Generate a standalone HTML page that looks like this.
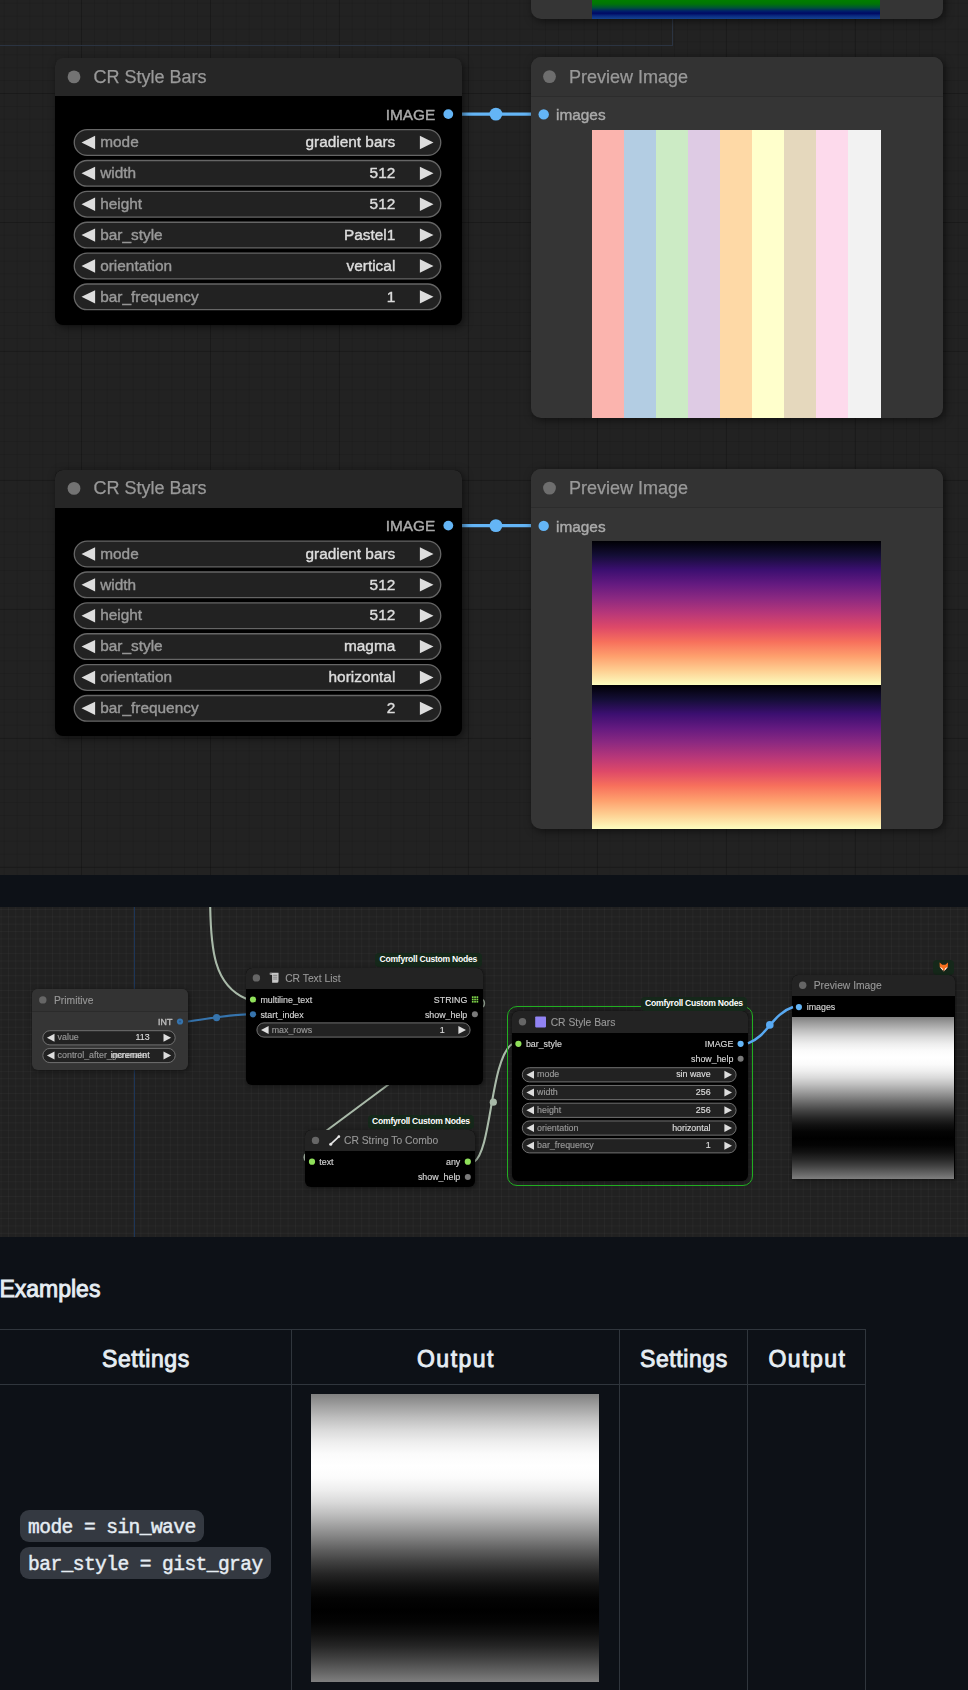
<!DOCTYPE html>
<html><head><meta charset="utf-8"><title>CR Style Bars</title>
<style>
*{box-sizing:border-box}
html,body{margin:0;padding:0}
body{width:968px;height:1690px;background:#0d1117;position:relative;overflow:hidden;font-family:"Liberation Sans",Arial,sans-serif}
.abs,.cv *{position:absolute}
.cv{position:absolute;left:0;width:968px;overflow:hidden}
.cv svg{overflow:visible}
.grid1{left:0;top:0;width:100%;height:100%;
 background-image:
  linear-gradient(to right,rgba(0,0,0,.17) 0,rgba(0,0,0,.17) 1.5px,transparent 1.5px),
  linear-gradient(to bottom,rgba(0,0,0,.17) 0,rgba(0,0,0,.17) 1.5px,transparent 1.5px),
  linear-gradient(to right,rgba(0,0,0,.085) 0,rgba(0,0,0,.085) 1px,transparent 1px),
  linear-gradient(to bottom,rgba(0,0,0,.085) 0,rgba(0,0,0,.085) 1px,transparent 1px);
 background-size:129px 129px,129px 129px,12.9px 12.9px,12.9px 12.9px;
 background-position:81px 93px,81px 93px,81px 93px,81px 93px}
.grid2{left:0;top:0;width:100%;height:100%;
 background-image:
  linear-gradient(to right,rgba(255,255,255,.026) 0,rgba(255,255,255,.026) 1px,transparent 1px),
  linear-gradient(to bottom,rgba(255,255,255,.026) 0,rgba(255,255,255,.026) 1px,transparent 1px);
 background-size:7.37px 7.37px;background-position:0.6px 2px}
.nd{box-shadow:2px 2px 8px rgba(0,0,0,.55)}
.nd2{box-shadow:1px 1px 5px rgba(0,0,0,.5)}
.t{white-space:nowrap}
text{white-space:pre}
.b1{font-size:15.4px;stroke-width:.4px}
.t1{font-size:18px;fill:#999;stroke:#999;stroke-width:.25px}
.s2{font-size:8.87px;stroke-width:.15px}
.t2{font-size:10.3px;fill:#999;stroke:#999;stroke-width:.1px}
.bd{background:#15281a;border-radius:4px;color:#fff;font-size:8.6px;font-weight:bold;text-align:center;white-space:nowrap;letter-spacing:-.25px}
.gh{color:#e6edf3;white-space:nowrap}
.h{font-weight:normal;-webkit-text-stroke:.9px currentColor}
.chip{height:32px;border-radius:9px;background:#343941;color:#e6edf3;font-family:"Liberation Mono",monospace;font-size:19.6px;letter-spacing:-.59px;line-height:37.4px;padding-left:8.3px;white-space:nowrap;-webkit-text-stroke:.45px currentColor;overflow:hidden}
</style></head>
<body>
<div class="cv" style="top:0px;height:875.1px;background-color:#222"><div class="grid1"></div><svg style="left:0;top:0" width="968" height="875.1"><path d="M459.9,114.1 H545" stroke="#64b5f6" stroke-width="3.3" fill="none"/><circle cx="495.9" cy="114.1" r="6.4" fill="#64b5f6"/><path d="M459.9,525.6 H545" stroke="#64b5f6" stroke-width="3.3" fill="none"/><circle cx="495.9" cy="525.6" r="6.4" fill="#64b5f6"/></svg><div style="left:0;top:45px;width:673px;height:1px;background:#2b3442"></div><div style="left:672px;top:19px;width:1px;height:27px;background:#2b3442"></div><div class="nd" style="left:530.5px;top:-30px;width:412.9px;height:48.7px;background:#353535;border-radius:10px"></div><div class="" style="left:592.3px;top:-1px;width:288px;height:20.2px;background:linear-gradient(to bottom,#007e00 0,#007c00 2px,#007408 5px,#00503a 9px,#00206a 12px,#000a64 14.3px,#0a2c82 17px,#16448f 20.2px)"></div><div class="nd" style="left:55.4px;top:58.5px;width:406.5px;height:266px;background:#000;border-radius:8px"></div><div class="" style="left:55.4px;top:58.3px;width:406.5px;height:38.2px;background:#262626;border-radius:8px 8px 0 0"></div><div class="nd" style="left:530.5px;top:57px;width:412.9px;height:360.7px;background:#353535;border-radius:10px"></div><div class="" style="left:530.5px;top:57px;width:412.9px;height:39.5px;background:#333;border-radius:10px 10px 0 0;border-bottom:1px solid #2c2c2c"></div><div class="" style="left:592.3px;top:129.5px;width:288.5px;height:288px;background:linear-gradient(to right,#fbb4ae 0px,#fbb4ae 32px,#b3cde3 32px,#b3cde3 64px,#ccebc5 64px,#ccebc5 96px,#decbe4 96px,#decbe4 128px,#fed9a6 128px,#fed9a6 160px,#ffffcc 160px,#ffffcc 192px,#e5d8bd 192px,#e5d8bd 224px,#fddaec 224px,#fddaec 256px,#f2f2f2 256px,#f2f2f2 288px)"></div><div class="nd" style="left:55.4px;top:470px;width:406.5px;height:266px;background:#000;border-radius:8px"></div><div class="" style="left:55.4px;top:469.8px;width:406.5px;height:38.2px;background:#262626;border-radius:8px 8px 0 0"></div><div class="nd" style="left:530.5px;top:468.5px;width:412.9px;height:360.7px;background:#353535;border-radius:10px"></div><div class="" style="left:530.5px;top:468.5px;width:412.9px;height:39.5px;background:#333;border-radius:10px 10px 0 0;border-bottom:1px solid #2c2c2c"></div><div class="" style="left:592.3px;top:541px;width:288.5px;height:288px;background:linear-gradient(to bottom,#000004 0.0px,#140e36 14.4px,#3b0f70 28.8px,#641a80 43.2px,#8c2981 57.6px,#b73779 72.0px,#de4968 86.4px,#f7705c 100.8px,#fe9f6d 115.2px,#fecf92 129.6px,#fcfdbf 144.0px,#000004 144.0px,#140e36 158.4px,#3b0f70 172.8px,#641a80 187.2px,#8c2981 201.6px,#b73779 216.0px,#de4968 230.4px,#f7705c 244.8px,#fe9f6d 259.2px,#fecf92 273.6px,#fcfdbf 288.0px)"></div><svg style="left:0;top:0" width="968" height="875.1"><circle cx="74" cy="76.9" r="6.4" fill="#737373"/><circle cx="448.3" cy="114.1" r="4.9" fill="#64b5f6"/><rect x="74.25" y="129.65" width="366.5" height="25.7" rx="12.85" fill="#222" stroke="#666" stroke-width="1.3"/><path d="M81.5,142.5 L95.1,135.8 V149.2 Z" fill="#ddd"/><path d="M433.5,142.5 L419.9,135.8 V149.2 Z" fill="#ddd"/><rect x="74.25" y="160.52" width="366.5" height="25.7" rx="12.85" fill="#222" stroke="#666" stroke-width="1.3"/><path d="M81.5,173.37 L95.1,166.67 V180.07 Z" fill="#ddd"/><path d="M433.5,173.37 L419.9,166.67 V180.07 Z" fill="#ddd"/><rect x="74.25" y="191.39" width="366.5" height="25.7" rx="12.85" fill="#222" stroke="#666" stroke-width="1.3"/><path d="M81.5,204.24 L95.1,197.54 V210.94 Z" fill="#ddd"/><path d="M433.5,204.24 L419.9,197.54 V210.94 Z" fill="#ddd"/><rect x="74.25" y="222.26" width="366.5" height="25.7" rx="12.85" fill="#222" stroke="#666" stroke-width="1.3"/><path d="M81.5,235.11 L95.1,228.41 V241.81 Z" fill="#ddd"/><path d="M433.5,235.11 L419.9,228.41 V241.81 Z" fill="#ddd"/><rect x="74.25" y="253.13" width="366.5" height="25.7" rx="12.85" fill="#222" stroke="#666" stroke-width="1.3"/><path d="M81.5,265.98 L95.1,259.28 V272.68 Z" fill="#ddd"/><path d="M433.5,265.98 L419.9,259.28 V272.68 Z" fill="#ddd"/><rect x="74.25" y="284" width="366.5" height="25.7" rx="12.85" fill="#222" stroke="#666" stroke-width="1.3"/><path d="M81.5,296.85 L95.1,290.15 V303.55 Z" fill="#ddd"/><path d="M433.5,296.85 L419.9,290.15 V303.55 Z" fill="#ddd"/><circle cx="549.5" cy="76.6" r="6.4" fill="#6e6e6e"/><circle cx="543.7" cy="114.4" r="5.2" fill="#64b5f6"/><circle cx="74" cy="488.4" r="6.4" fill="#737373"/><circle cx="448.3" cy="525.6" r="4.9" fill="#64b5f6"/><rect x="74.25" y="541.15" width="366.5" height="25.7" rx="12.85" fill="#222" stroke="#666" stroke-width="1.3"/><path d="M81.5,554 L95.1,547.3 V560.7 Z" fill="#ddd"/><path d="M433.5,554 L419.9,547.3 V560.7 Z" fill="#ddd"/><rect x="74.25" y="572.02" width="366.5" height="25.7" rx="12.85" fill="#222" stroke="#666" stroke-width="1.3"/><path d="M81.5,584.87 L95.1,578.17 V591.57 Z" fill="#ddd"/><path d="M433.5,584.87 L419.9,578.17 V591.57 Z" fill="#ddd"/><rect x="74.25" y="602.89" width="366.5" height="25.7" rx="12.85" fill="#222" stroke="#666" stroke-width="1.3"/><path d="M81.5,615.74 L95.1,609.04 V622.44 Z" fill="#ddd"/><path d="M433.5,615.74 L419.9,609.04 V622.44 Z" fill="#ddd"/><rect x="74.25" y="633.76" width="366.5" height="25.7" rx="12.85" fill="#222" stroke="#666" stroke-width="1.3"/><path d="M81.5,646.61 L95.1,639.91 V653.31 Z" fill="#ddd"/><path d="M433.5,646.61 L419.9,639.91 V653.31 Z" fill="#ddd"/><rect x="74.25" y="664.63" width="366.5" height="25.7" rx="12.85" fill="#222" stroke="#666" stroke-width="1.3"/><path d="M81.5,677.48 L95.1,670.78 V684.18 Z" fill="#ddd"/><path d="M433.5,677.48 L419.9,670.78 V684.18 Z" fill="#ddd"/><rect x="74.25" y="695.5" width="366.5" height="25.7" rx="12.85" fill="#222" stroke="#666" stroke-width="1.3"/><path d="M81.5,708.35 L95.1,701.65 V715.05 Z" fill="#ddd"/><path d="M433.5,708.35 L419.9,701.65 V715.05 Z" fill="#ddd"/><circle cx="549.5" cy="488.1" r="6.4" fill="#6e6e6e"/><circle cx="543.7" cy="525.9" r="5.2" fill="#64b5f6"/></svg><svg style="left:0;top:0;will-change:transform" width="968" height="875.1"><text class="t1" x="93.4" y="82.94">CR Style Bars</text><text class="b1" x="435.3" y="119.54" text-anchor="end" fill="#aaa" stroke="#aaa">IMAGE</text><text class="b1" x="100.2" y="147.24" fill="#999" stroke="#999">mode</text><text class="b1" x="395.3" y="147.24" text-anchor="end" fill="#ddd" stroke="#ddd">gradient bars</text><text class="b1" x="100.2" y="178.11" fill="#999" stroke="#999">width</text><text class="b1" x="395.3" y="178.11" text-anchor="end" fill="#ddd" stroke="#ddd">512</text><text class="b1" x="100.2" y="208.98" fill="#999" stroke="#999">height</text><text class="b1" x="395.3" y="208.98" text-anchor="end" fill="#ddd" stroke="#ddd">512</text><text class="b1" x="100.2" y="239.85" fill="#999" stroke="#999">bar_style</text><text class="b1" x="395.3" y="239.85" text-anchor="end" fill="#ddd" stroke="#ddd">Pastel1</text><text class="b1" x="100.2" y="270.72" fill="#999" stroke="#999">orientation</text><text class="b1" x="395.3" y="270.72" text-anchor="end" fill="#ddd" stroke="#ddd">vertical</text><text class="b1" x="100.2" y="301.59" fill="#999" stroke="#999">bar_frequency</text><text class="b1" x="395.3" y="301.59" text-anchor="end" fill="#ddd" stroke="#ddd">1</text><text class="t1" x="569" y="82.64">Preview Image</text><text class="b1" x="556" y="120.34" fill="#aaa" stroke="#aaa">images</text><text class="t1" x="93.4" y="494.44">CR Style Bars</text><text class="b1" x="435.3" y="531.04" text-anchor="end" fill="#aaa" stroke="#aaa">IMAGE</text><text class="b1" x="100.2" y="558.74" fill="#999" stroke="#999">mode</text><text class="b1" x="395.3" y="558.74" text-anchor="end" fill="#ddd" stroke="#ddd">gradient bars</text><text class="b1" x="100.2" y="589.61" fill="#999" stroke="#999">width</text><text class="b1" x="395.3" y="589.61" text-anchor="end" fill="#ddd" stroke="#ddd">512</text><text class="b1" x="100.2" y="620.48" fill="#999" stroke="#999">height</text><text class="b1" x="395.3" y="620.48" text-anchor="end" fill="#ddd" stroke="#ddd">512</text><text class="b1" x="100.2" y="651.35" fill="#999" stroke="#999">bar_style</text><text class="b1" x="395.3" y="651.35" text-anchor="end" fill="#ddd" stroke="#ddd">magma</text><text class="b1" x="100.2" y="682.22" fill="#999" stroke="#999">orientation</text><text class="b1" x="395.3" y="682.22" text-anchor="end" fill="#ddd" stroke="#ddd">horizontal</text><text class="b1" x="100.2" y="713.09" fill="#999" stroke="#999">bar_frequency</text><text class="b1" x="395.3" y="713.09" text-anchor="end" fill="#ddd" stroke="#ddd">2</text><text class="t1" x="569" y="494.14">Preview Image</text><text class="b1" x="556" y="531.84" fill="#aaa" stroke="#aaa">images</text></svg></div>
<div class="cv" style="top:907px;height:329.8px;background-color:#212121"><div class="grid2"></div><div style="left:134.2px;top:0;width:1px;height:330px;background:#1d3557"></div><svg style="left:0;top:0" width="968" height="329.8"><path d="M210.1,-7 C210.5,43 214,78 246.2,91.8" fill="none" stroke="#a9baa9" stroke-width="2.1"/><path d="M390.5,176 L326,224" fill="none" stroke="#a9baa9" stroke-width="2.1"/><path d="M306,246.5 A4,4.5 0 0 0 306,254" fill="none" stroke="#a9baa9" stroke-width="1.6"/><path d="M474,255 C492,243 490,153 512,137" fill="none" stroke="#a9baa9" stroke-width="2.1"/><circle cx="493.3" cy="195.2" r="3.6" fill="#a9baa9"/><path d="M482.4,92.6 A2.6,3.8 0 0 1 482.4,100" fill="none" stroke="#a9baa9" stroke-width="1.5"/><path d="M186,114.6 C205,112.5 225,108 247,107.3" fill="none" stroke="#3674ad" stroke-width="2.2"/><circle cx="216.6" cy="110.6" r="3.6" fill="#3674ad"/></svg><div class="nd2" style="left:31.9px;top:82px;width:155.7px;height:80.6px;background:#353535;border-radius:6px"></div><div class="" style="left:31.9px;top:82px;width:155.7px;height:22.6px;background:#333;border-radius:6px 6px 0 0;border-bottom:1px solid #2b2b2b"></div><div class="bd" style="left:375px;top:45.7px;width:106.6px;height:14.8px;line-height:13.3px">Comfyroll Custom Nodes</div><div class="nd2" style="left:245.9px;top:60.6px;width:236.7px;height:117.4px;background:#000;border-radius:6px"></div><div class="" style="left:245.9px;top:60.6px;width:236.7px;height:21.3px;background:#232323;border-radius:6px 6px 0 0"></div><svg style="left:269.3px;top:65.4px" width="11.4" height="11.4" viewBox="0 0 11 11"><path d="M1.2,0.8 H9.2 V8.6 Q9.2,10.4 7.6,10.4 H3 V3 H1.2 Z" fill="#c8c8c8"/><path d="M0.6,0.8 H2.6 V2.6 H0.6Z" fill="#8a8a8a"/><path d="M4,3.2H8M4,5H8M4,6.8H8" stroke="#666" stroke-width=".7"/></svg><div class="bd" style="left:367.6px;top:208.1px;width:106.6px;height:14.3px;line-height:12.8px">Comfyroll Custom Nodes</div><div class="nd2" style="left:304.9px;top:222.5px;width:170.3px;height:57.8px;background:#000;border-radius:6px"></div><div class="" style="left:304.9px;top:222.5px;width:170.3px;height:21.5px;background:#232323;border-radius:6px 6px 0 0"></div><svg style="left:328.5px;top:227.6px" width="11.5" height="11" viewBox="0 0 11.5 11"><path d="M1.8,9.2 L9.8,1.6" stroke="#e8e8e8" stroke-width="1.6" stroke-linecap="round"/><circle cx="1.7" cy="9.3" r="1.5" fill="#e8e8e8"/><circle cx="9.9" cy="1.6" r="1.3" fill="#e8e8e8"/></svg><div class="" style="left:506.8px;top:98.8px;width:246.4px;height:179.8px;border:1.2px solid #22b022;border-radius:10px"></div><div class="" style="left:511.6px;top:104px;width:236.4px;height:169.8px;background:#000;border-radius:6px;box-shadow:0 0 4px rgba(0,0,0,.6)"></div><div class="" style="left:511.6px;top:104px;width:236.4px;height:21.7px;background:#232323;border-radius:6px 6px 0 0"></div><div class="bd" style="left:640.5px;top:89.6px;width:106.8px;height:14px;line-height:12.5px">Comfyroll Custom Nodes</div><div class="bd" style="left:933.1px;top:53px;width:20.8px;height:14.5px"><svg style="left:5.6px;top:1.6px" width="9.6" height="10" viewBox="0 0 10 10"><path d="M0.6,0.4 L3.4,2.6 H6.6 L9.4,0.4 L9.2,5 L5,9.6 L0.8,5 Z" fill="#f4711f"/><path d="M0.8,5 L3.3,6 L5,9.6 Z M9.2,5 L6.7,6 L5,9.6Z" fill="#fff"/><path d="M4.2,8.4 H5.8 L5,9.6Z" fill="#333"/></svg></div><div class="nd2" style="left:791.8px;top:67.9px;width:163px;height:204.4px;background:#000;border-radius:6px 6px 0 0"></div><div class="" style="left:791.8px;top:67.9px;width:163px;height:21.1px;background:#232323;border-radius:6px 6px 0 0"></div><div class="" style="left:791.8px;top:110px;width:162.4px;height:162.2px;background:linear-gradient(to bottom,rgb(128,128,128) 0.00%,rgb(160,160,160) 4.17%,rgb(191,191,191) 8.33%,rgb(218,218,218) 12.50%,rgb(238,238,238) 16.67%,rgb(251,251,251) 20.83%,rgb(255,255,255) 25.00%,rgb(251,251,251) 29.17%,rgb(238,238,238) 33.33%,rgb(218,218,218) 37.50%,rgb(191,191,191) 41.67%,rgb(160,160,160) 45.83%,rgb(128,128,128) 50.00%,rgb(95,95,95) 54.17%,rgb(64,64,64) 58.33%,rgb(37,37,37) 62.50%,rgb(17,17,17) 66.67%,rgb(4,4,4) 70.83%,rgb(0,0,0) 75.00%,rgb(4,4,4) 79.17%,rgb(17,17,17) 83.33%,rgb(37,37,37) 87.50%,rgb(64,64,64) 91.67%,rgb(95,95,95) 95.83%,rgb(127,127,127) 100.00%)"></div><svg style="left:0;top:0" width="968" height="329.8"><circle cx="42.8" cy="92.9" r="3.7" fill="#666"/><circle cx="180" cy="114.5" r="3.1" fill="#3674ad"/><circle cx="180" cy="114.5" r="1.1" fill="#2c5c8e"/><rect x="42.8" y="123.7" width="132.4" height="14.2" rx="7.1" fill="#222" stroke="#707070" stroke-width="1"/><path d="M46.9,130.8 L54.5,126.8 V134.8 Z" fill="#ddd"/><path d="M171.1,130.8 L163.5,126.8 V134.8 Z" fill="#ddd"/><rect x="42.8" y="141.4" width="132.4" height="14.2" rx="7.1" fill="#222" stroke="#707070" stroke-width="1"/><path d="M46.9,148.5 L54.5,144.5 V152.5 Z" fill="#ddd"/><path d="M171.1,148.5 L163.5,144.5 V152.5 Z" fill="#ddd"/><circle cx="256.4" cy="70.9" r="3.7" fill="#666"/><circle cx="253" cy="92.5" r="3.1" fill="#8fe05a"/><circle cx="253" cy="107.3" r="3.1" fill="#3674ad"/><rect x="471.9" y="89.3" width="1.7" height="1.7" rx="0" fill="#7fd54a"/><rect x="474.2" y="89.3" width="1.7" height="1.7" rx="0" fill="#7fd54a"/><rect x="476.5" y="89.3" width="1.7" height="1.7" rx="0" fill="#7fd54a"/><rect x="471.9" y="91.6" width="1.7" height="1.7" rx="0" fill="#7fd54a"/><rect x="474.2" y="91.6" width="1.7" height="1.7" rx="0" fill="#7fd54a"/><rect x="476.5" y="91.6" width="1.7" height="1.7" rx="0" fill="#7fd54a"/><rect x="471.9" y="93.9" width="1.7" height="1.7" rx="0" fill="#7fd54a"/><rect x="474.2" y="93.9" width="1.7" height="1.7" rx="0" fill="#7fd54a"/><rect x="476.5" y="93.9" width="1.7" height="1.7" rx="0" fill="#7fd54a"/><circle cx="474.9" cy="107.3" r="3" fill="#7a7a7a"/><rect x="256.9" y="115.9" width="213.2" height="14.2" rx="7.1" fill="#222" stroke="#707070" stroke-width="1"/><path d="M261,123 L268.6,119 V127 Z" fill="#ddd"/><path d="M466,123 L458.4,119 V127 Z" fill="#ddd"/><circle cx="315.5" cy="233.4" r="3.7" fill="#666"/><circle cx="312" cy="254.7" r="3.1" fill="#8fe05a"/><circle cx="467.8" cy="254.7" r="3.1" fill="#8fe05a"/><circle cx="467.8" cy="270" r="3" fill="#7a7a7a"/><circle cx="522.5" cy="114.8" r="3.7" fill="#666"/><rect x="535.2" y="109.5" width="10.8" height="10.9" rx="0.8" fill="#9183f3"/><circle cx="518.4" cy="136.8" r="3.1" fill="#8fe05a"/><circle cx="740.6" cy="136.8" r="3.1" fill="#64b5f6"/><circle cx="740.6" cy="151.7" r="3" fill="#7a7a7a"/><rect x="522.3" y="160.7" width="213.8" height="14.2" rx="7.1" fill="#222" stroke="#707070" stroke-width="1"/><path d="M526.4,167.8 L534,163.8 V171.8 Z" fill="#ddd"/><path d="M732,167.8 L724.4,163.8 V171.8 Z" fill="#ddd"/><rect x="522.3" y="178.45" width="213.8" height="14.2" rx="7.1" fill="#222" stroke="#707070" stroke-width="1"/><path d="M526.4,185.55 L534,181.55 V189.55 Z" fill="#ddd"/><path d="M732,185.55 L724.4,181.55 V189.55 Z" fill="#ddd"/><rect x="522.3" y="196.2" width="213.8" height="14.2" rx="7.1" fill="#222" stroke="#707070" stroke-width="1"/><path d="M526.4,203.3 L534,199.3 V207.3 Z" fill="#ddd"/><path d="M732,203.3 L724.4,199.3 V207.3 Z" fill="#ddd"/><rect x="522.3" y="213.95" width="213.8" height="14.2" rx="7.1" fill="#222" stroke="#707070" stroke-width="1"/><path d="M526.4,221.05 L534,217.05 V225.05 Z" fill="#ddd"/><path d="M732,221.05 L724.4,217.05 V225.05 Z" fill="#ddd"/><rect x="522.3" y="231.7" width="213.8" height="14.2" rx="7.1" fill="#222" stroke="#707070" stroke-width="1"/><path d="M526.4,238.8 L534,234.8 V242.8 Z" fill="#ddd"/><path d="M732,238.8 L724.4,234.8 V242.8 Z" fill="#ddd"/><path d="M748,136.4 C768,129 772,107 793,100" fill="none" stroke="#58a9f2" stroke-width="2.5"/><circle cx="769.8" cy="117.9" r="3.8" fill="#58a9f2"/><circle cx="802.7" cy="78.2" r="3.7" fill="#666"/><circle cx="798.9" cy="100.1" r="3.1" fill="#64b5f6"/></svg><svg style="left:0;top:0;will-change:transform" width="968" height="329.8"><text class="t2" x="54" y="97.27">Primitive</text><text class="s2" x="172.3" y="117.77" text-anchor="end" fill="#bbb" stroke="#bbb" style="stroke-width:.4px">INT</text><text class="s2" x="57.6" y="133.47" fill="#999" stroke="#999">value</text><text class="s2" x="149.7" y="133.47" text-anchor="end" fill="#ddd" stroke="#ddd">113</text><text class="s2" x="57.6" y="151.17" fill="#999" stroke="#999">control_after_generate</text><text class="s2" x="149.7" y="151.17" text-anchor="end" fill="#ddd" stroke="#ddd">increment</text><text class="t2" x="285.2" y="75.27">CR Text List</text><text class="s2" x="260.4" y="95.87" fill="#d5d5d5" stroke="#d5d5d5">multiline_text</text><text class="s2" x="260.4" y="110.67" fill="#d5d5d5" stroke="#d5d5d5">start_index</text><text class="s2" x="467.3" y="95.87" text-anchor="end" fill="#d5d5d5" stroke="#d5d5d5">STRING</text><text class="s2" x="467.3" y="110.67" text-anchor="end" fill="#d5d5d5" stroke="#d5d5d5">show_help</text><text class="s2" x="271.7" y="125.67" fill="#999" stroke="#999">max_rows</text><text class="s2" x="444.6" y="125.67" text-anchor="end" fill="#ddd" stroke="#ddd">1</text><text class="t2" x="344" y="237.47">CR String To Combo</text><text class="s2" x="319.3" y="258.07" fill="#d5d5d5" stroke="#d5d5d5">text</text><text class="s2" x="460.3" y="258.07" text-anchor="end" fill="#d5d5d5" stroke="#d5d5d5">any</text><text class="s2" x="460.3" y="273.27" text-anchor="end" fill="#d5d5d5" stroke="#d5d5d5">show_help</text><text class="t2" x="550.7" y="119.07">CR Style Bars</text><text class="s2" x="525.9" y="140.17" fill="#d5d5d5" stroke="#d5d5d5">bar_style</text><text class="s2" x="733.4" y="140.17" text-anchor="end" fill="#d5d5d5" stroke="#d5d5d5">IMAGE</text><text class="s2" x="733.4" y="155.07" text-anchor="end" fill="#d5d5d5" stroke="#d5d5d5">show_help</text><text class="s2" x="537.1" y="170.47" fill="#999" stroke="#999">mode</text><text class="s2" x="710.6" y="170.47" text-anchor="end" fill="#ddd" stroke="#ddd">sin wave</text><text class="s2" x="537.1" y="188.22" fill="#999" stroke="#999">width</text><text class="s2" x="710.6" y="188.22" text-anchor="end" fill="#ddd" stroke="#ddd">256</text><text class="s2" x="537.1" y="205.97" fill="#999" stroke="#999">height</text><text class="s2" x="710.6" y="205.97" text-anchor="end" fill="#ddd" stroke="#ddd">256</text><text class="s2" x="537.1" y="223.72" fill="#999" stroke="#999">orientation</text><text class="s2" x="710.6" y="223.72" text-anchor="end" fill="#ddd" stroke="#ddd">horizontal</text><text class="s2" x="537.1" y="241.47" fill="#999" stroke="#999">bar_frequency</text><text class="s2" x="710.6" y="241.47" text-anchor="end" fill="#ddd" stroke="#ddd">1</text><text class="t2" x="813.7" y="82.37">Preview Image</text><text class="s2" x="806.7" y="103.47" fill="#d5d5d5" stroke="#d5d5d5">images</text></svg></div>
<div class="abs gh h" style="left:-.6px;top:1273px;font-size:23px;line-height:32px;letter-spacing:0">Examples</div><div class="abs" style="left:0;top:1329px;width:866px;height:1px;background:#30363d"></div><div class="abs" style="left:0;top:1384px;width:866px;height:1px;background:#30363d"></div><div class="abs" style="left:291px;top:1329px;width:1px;height:400px;background:#30363d"></div><div class="abs" style="left:619px;top:1329px;width:1px;height:400px;background:#30363d"></div><div class="abs" style="left:747px;top:1329px;width:1px;height:400px;background:#30363d"></div><div class="abs" style="left:865px;top:1329px;width:1px;height:400px;background:#30363d"></div><div class="abs gh h" style="left:45.900000000000006px;width:200px;text-align:center;top:1342.8px;font-size:23px;line-height:32px;letter-spacing:0.6px">Settings</div><div class="abs gh h" style="left:356px;width:200px;text-align:center;top:1342.8px;font-size:23px;line-height:32px;letter-spacing:1.5px">Output</div><div class="abs gh h" style="left:583.9px;width:200px;text-align:center;top:1342.8px;font-size:23px;line-height:32px;letter-spacing:0.6px">Settings</div><div class="abs gh h" style="left:707.5px;width:200px;text-align:center;top:1342.8px;font-size:23px;line-height:32px;letter-spacing:1.5px">Output</div><div class="abs chip" style="left:19.8px;top:1509.8px;width:184.2px">mode = sin_wave</div><div class="abs chip" style="left:19.8px;top:1547.1px;width:251.2px">bar_style = gist_gray</div><div class="abs" style="left:311px;top:1394.3px;width:288.2px;height:288px;background:linear-gradient(to bottom,rgb(128,128,128) 0.00%,rgb(160,160,160) 4.17%,rgb(191,191,191) 8.33%,rgb(218,218,218) 12.50%,rgb(238,238,238) 16.67%,rgb(251,251,251) 20.83%,rgb(255,255,255) 25.00%,rgb(251,251,251) 29.17%,rgb(238,238,238) 33.33%,rgb(218,218,218) 37.50%,rgb(191,191,191) 41.67%,rgb(160,160,160) 45.83%,rgb(128,128,128) 50.00%,rgb(95,95,95) 54.17%,rgb(64,64,64) 58.33%,rgb(37,37,37) 62.50%,rgb(17,17,17) 66.67%,rgb(4,4,4) 70.83%,rgb(0,0,0) 75.00%,rgb(4,4,4) 79.17%,rgb(17,17,17) 83.33%,rgb(37,37,37) 87.50%,rgb(64,64,64) 91.67%,rgb(95,95,95) 95.83%,rgb(127,127,127) 100.00%)"></div>
</body></html>
